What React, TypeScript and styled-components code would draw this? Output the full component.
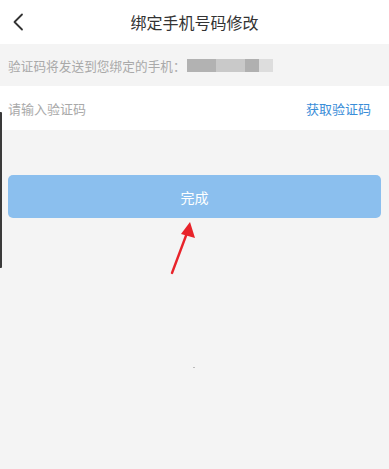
import styled, { createGlobalStyle } from "styled-components";

const GlobalStyle = createGlobalStyle`
  html, body {
    margin: 0;
    padding: 0;
    background: #f4f4f4;
  }
  * {
    box-sizing: border-box;
  }
`;

const maskSegments = [
  { width: 29, color: "#b2b2b2" },
  { width: 29, color: "#c9c9c9" },
  { width: 14, color: "#b0b0b0" },
  { width: 14, color: "#dddddd" },
];

const App: React.FC = () => {
  return (
    <Page>
      <GlobalStyle />
      <Header>
        <BackButton aria-label="返回">
          <svg width="12" height="18" viewBox="0 0 12 18" fill="none">
            <path
              d="M10 1.5 L2.5 9 L10 16.5"
              stroke="#333"
              strokeWidth="1.8"
              strokeLinecap="round"
              strokeLinejoin="round"
            />
          </svg>
        </BackButton>
        <Title>绑定手机号码修改</Title>
        <span />
      </Header>
      <Notice>
        <NoticeText>验证码将发送到您绑定的手机：</NoticeText>
        <Mask>
          {maskSegments.map((s, i) => (
            <MaskCell key={i} width={s.width} color={s.color} />
          ))}
        </Mask>
      </Notice>
      <CodeRow>
        <CodeInput placeholder="请输入验证码" />
        <GetCode>获取验证码</GetCode>
      </CodeRow>
      <SubmitWrap>
        <SubmitButton>完成</SubmitButton>
        <Pointer width="30" height="56" viewBox="0 0 30 56">
          <line x1="4" y1="52" x2="19" y2="12" stroke="#e8232a" strokeWidth="2.4" strokeLinecap="round" />
          <polygon points="22,1 27,17 13,13" fill="#e8232a" />
        </Pointer>
      </SubmitWrap>
      <Dot />
      <EdgeBar />
    </Page>
  );
};

export default App;

const Page = styled.div`
  position: relative;
  min-height: 469px;
  background: #f4f4f4;
  font-family: "Noto Sans CJK SC", "Noto Sans", sans-serif;
  overflow: hidden;
`;

const Header = styled.header`
  height: 44px;
  background: #fff;
  display: grid;
  grid-template-columns: 44px 1fr 44px;
  align-items: center;
`;

const BackButton = styled.button`
  border: none;
  background: none;
  padding: 0 0 0 12px;
  height: 44px;
  display: flex;
  align-items: center;
`;

const Title = styled.h1`
  margin: 0;
  text-align: center;
  font-size: 16px;
  font-weight: 400;
  color: #333;
  line-height: 44px;
`;

const Notice = styled.div`
  height: 42px;
  padding: 0 8px;
  display: flex;
  align-items: center;
`;

const NoticeText = styled.span`
  font-size: 12.6px;
  color: #a9a9a9;
  letter-spacing: 0.1px;
`;

const Mask = styled.div`
  display: flex;
  height: 13px;
  margin-left: 1px;
  margin-top: 1px;
`;

type MaskCellProps = { width: number; color: string };

const MaskCell = styled.div<MaskCellProps>`
  width: ${(p) => p.width}px;
  height: 100%;
  background: ${(p) => p.color};
`;

const CodeRow = styled.div`
  height: 44px;
  background: #fff;
  display: flex;
  align-items: center;
  justify-content: space-between;
  padding: 0 18px 0 8px;
`;

const CodeInput = styled.input`
  border: none;
  outline: none;
  background: transparent;
  padding: 0;
  font-family: inherit;
  font-size: 13px;
  color: #333;
  flex: 1;

  &::placeholder {
    color: #a9a9a9;
  }
`;

const GetCode = styled.span`
  font-size: 13px;
  color: #3a8dd8;
`;

const SubmitWrap = styled.div`
  position: relative;
  padding: 45px 8px 0;
`;

const SubmitButton = styled.button`
  width: 100%;
  height: 43px;
  border: none;
  border-radius: 5px;
  background: #8bbfee;
  color: #fff;
  font-family: inherit;
  font-size: 14px;
  display: flex;
  align-items: center;
  justify-content: center;
`;

const Pointer = styled.svg`
  position: absolute;
  left: 168px;
  top: 91px;
`;

const Dot = styled.div`
  position: absolute;
  left: 193px;
  top: 367px;
  width: 2px;
  height: 1px;
  background: #bbb;
`;

const EdgeBar = styled.div`
  position: absolute;
  left: 0;
  top: 112px;
  width: 2px;
  height: 156px;
  background: #3a3a3a;
  border-radius: 0 1px 1px 0;
`;
